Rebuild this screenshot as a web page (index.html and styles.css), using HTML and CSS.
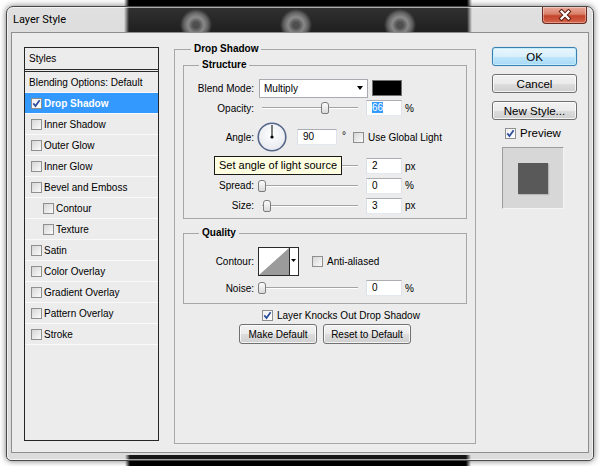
FILE: index.html
```html
<!DOCTYPE html>
<html lang="en">
<head>
<meta charset="utf-8">
<title>Layer Style</title>
<link rel="stylesheet" href="styles.css">
</head>
<body>
<div class="window">
  <header class="titlebar">
    <span class="title">Layer Style</span>
    <div class="close-btn">
      <svg width="20" height="12" viewBox="0 0 20 12"><path class="x-outline" d="M6.5 2.5 L13.5 9.5 M13.5 2.5 L6.5 9.5"/><path class="x-fill" d="M6.5 2.5 L13.5 9.5 M13.5 2.5 L6.5 9.5"/></svg>
    </div>
  </header>
  <main class="content">
    <section class="styles-panel">
      <div class="styles-head">Styles</div>
      <ul class="style-list">
        <li class="style-item blending">Blending Options: Default</li>
        <li class="style-item selected"><span class="cb checked"><svg width="9" height="9" viewBox="0 0 9 9"><path d="M1.3 4.4 L3.5 7 L7.6 1.2" fill="none" stroke="#2b4c9c" stroke-width="1.7"/></svg></span>Drop Shadow</li>
        <li class="style-item"><span class="cb"></span>Inner Shadow</li>
        <li class="style-item"><span class="cb"></span>Outer Glow</li>
        <li class="style-item"><span class="cb"></span>Inner Glow</li>
        <li class="style-item"><span class="cb"></span>Bevel and Emboss</li>
        <li class="style-item sub"><span class="cb"></span>Contour</li>
        <li class="style-item sub"><span class="cb"></span>Texture</li>
        <li class="style-item"><span class="cb"></span>Satin</li>
        <li class="style-item"><span class="cb"></span>Color Overlay</li>
        <li class="style-item"><span class="cb"></span>Gradient Overlay</li>
        <li class="style-item"><span class="cb"></span>Pattern Overlay</li>
        <li class="style-item"><span class="cb"></span>Stroke</li>
      </ul>
    </section>

    <fieldset class="group main-group">
      <legend>Drop Shadow</legend>
      <fieldset class="group sub-group structure">
        <legend>Structure</legend>
        <div class="row row-blend">
          <span class="lbl">Blend Mode:</span>
          <div class="select"><span>Multiply</span><span class="arrow"></span></div>
          <div class="swatch"></div>
        </div>
        <div class="row row-opacity">
          <span class="lbl">Opacity:</span>
          <div class="slider"><span class="thumb" style="left:63px"></span></div>
          <div class="num"><span class="sel">66</span></div>
          <span class="unit">%</span>
        </div>
        <div class="row row-angle">
          <span class="lbl">Angle:</span>
          <svg class="dial" width="30" height="30" viewBox="0 0 30 30">
            <defs><radialGradient id="dg" cx="50%" cy="40%" r="60%"><stop offset="0" stop-color="#ffffff"/><stop offset="1" stop-color="#e6e9ee"/></radialGradient></defs>
            <circle cx="15" cy="15" r="13.8" fill="url(#dg)" stroke="#56668a" stroke-width="1.6"/>
            <line x1="15" y1="15" x2="15" y2="3" stroke="#000" stroke-width="1"/>
            <circle cx="15" cy="15" r="1.6" fill="#000"/>
          </svg>
          <div class="num num-wide">90</div>
          <span class="deg">°</span>
          <span class="cb cb-global"></span>
          <span class="cb-label">Use Global Light</span>
        </div>
        <div class="row row-distance">
          <span class="lbl"></span>
          <div class="slider"><span class="thumb" style="left:0px"></span></div>
          <div class="num">2</div>
          <span class="unit">px</span>
          <div class="tooltip">Set angle of light source</div>
        </div>
        <div class="row row-spread">
          <span class="lbl">Spread:</span>
          <div class="slider"><span class="thumb" style="left:0px"></span></div>
          <div class="num">0</div>
          <span class="unit">%</span>
        </div>
        <div class="row row-size">
          <span class="lbl">Size:</span>
          <div class="slider"><span class="thumb" style="left:5px"></span></div>
          <div class="num">3</div>
          <span class="unit">px</span>
        </div>
      </fieldset>

      <fieldset class="group sub-group quality">
        <legend>Quality</legend>
        <div class="row row-contour">
          <span class="lbl">Contour:</span>
          <svg class="contour" width="41" height="29" viewBox="0 0 41 29">
            <rect x="0.5" y="0.5" width="40" height="28" fill="#fff" stroke="#2a2a2a"/>
            <polygon points="1,28 31,1 31,28" fill="#9b9b9b"/>
            <line x1="31.5" y1="0" x2="31.5" y2="29" stroke="#2a2a2a"/>
            <polygon points="33,12 38,12 35.5,15" fill="#000"/>
          </svg>
          <span class="cb cb-aa"></span>
          <span class="cb-label">Anti-aliased</span>
        </div>
        <div class="row row-noise">
          <span class="lbl">Noise:</span>
          <div class="slider"><span class="thumb" style="left:0px"></span></div>
          <div class="num">0</div>
          <span class="unit">%</span>
        </div>
      </fieldset>

      <div class="knock">
        <span class="cb checked"><svg width="9" height="9" viewBox="0 0 9 9"><path d="M1.3 4.4 L3.5 7 L7.6 1.2" fill="none" stroke="#2b4c9c" stroke-width="1.7"/></svg></span>
        <span class="cb-label">Layer Knocks Out Drop Shadow</span>
      </div>
      <div class="defaults">
        <button class="btn btn-make">Make Default</button>
        <button class="btn btn-reset">Reset to Default</button>
      </div>
    </fieldset>

    <aside class="actions">
      <button class="btn btn-lg btn-ok">OK</button>
      <button class="btn btn-lg">Cancel</button>
      <button class="btn btn-lg btn-new">New Style...</button>
      <div class="preview-row">
        <span class="cb checked"><svg width="9" height="9" viewBox="0 0 9 9"><path d="M1.3 4.4 L3.5 7 L7.6 1.2" fill="none" stroke="#2b4c9c" stroke-width="1.7"/></svg></span>
        <span class="preview-label">Preview</span>
      </div>
      <div class="preview-box"><div class="preview-square"></div></div>
    </aside>
  </main>
</div>
</body>
</html>
```

FILE: styles.css
```css
* { box-sizing: border-box; }
html, body { margin: 0; padding: 0; }

body {
  width: 600px;
  height: 466px;
  overflow: hidden;
  font-family: "Liberation Sans", Arial, sans-serif;
  font-size: 10px;
  color: #000;
  background:
    radial-gradient(circle at 196px 25px, #3a3a3a 0 3px, #8a8a8a 8px, #555 12px, rgba(0,0,0,0) 16px),
    radial-gradient(circle at 296px 25px, #3a3a3a 0 3px, #8a8a8a 8px, #555 12px, rgba(0,0,0,0) 16px),
    radial-gradient(circle at 400px 25px, #3a3a3a 0 3px, #8a8a8a 8px, #555 12px, rgba(0,0,0,0) 16px),
    linear-gradient(90deg, rgba(0,0,0,0), #000 5px, #000 calc(100% - 5px), rgba(0,0,0,0)) 124px 0 / 348px 34px no-repeat,
    linear-gradient(90deg, rgba(0,0,0,0), #000 5px, #000 calc(100% - 5px), rgba(0,0,0,0)) 125px 455px / 346px 11px no-repeat,
    #fff;
}

/* ---------- window frame ---------- */
.window {
  margin: 6px 0 0 6px;
  width: 588px;
  height: 455px;
  border: 1px solid #4a4a4a;
  border-radius: 7px 7px 5px 5px;
  background: linear-gradient(rgba(255,255,255,0.12), rgba(255,255,255,0) 40px), rgba(95,95,95,0.22);
  box-shadow: 0 0 6px rgba(0,0,0,0.55), inset 0 0 0 1px rgba(255,255,255,0.6);
  display: flex;
  flex-direction: column;
}

.titlebar {
  height: 25px;
  flex: none;
  display: flex;
  justify-content: space-between;
  align-items: flex-start;
}

.title {
  font-family: Roboto, "Liberation Sans", sans-serif;
  font-size: 11px;
  line-height: 25px;
  padding-left: 6px;
  color: #000;
}

.close-btn {
  width: 45px;
  height: 17px;
  margin-right: 6px;
  border: 1px solid #6b2a1f;
  border-top: none;
  border-radius: 0 0 4px 4px;
  background: linear-gradient(#e9a99a 0%, #d98069 45%, #c4432c 55%, #d4644a 100%);
  box-shadow: inset 0 0 0 1px rgba(255,255,255,0.35);
  display: flex;
  align-items: center;
  justify-content: center;
}
.close-btn svg { display: block; }
.x-outline { stroke: #5b1d12; stroke-width: 4.2; stroke-linecap: square; fill: none; }
.x-fill { stroke: #fff; stroke-width: 2.2; stroke-linecap: square; fill: none; }

.content {
  flex: 1;
  margin: 0 4px 7px;
  border: 1px solid #8e8e8e;
  background: #ececec;
  display: flex;
  align-items: flex-start;
  padding: 10px 0 0 12px;
}

/* ---------- styles list ---------- */
.styles-panel {
  flex: none;
  margin-top: 4px;
  width: 135px;
  height: 394px;
  border: 1px solid #262626;
}
.styles-head {
  height: 24px;
  padding-left: 4px;
  line-height: 21px;
  border-bottom: 3px double #2a2a2a;
}
.style-list { list-style: none; margin: 0; padding: 0; }
.style-item {
  height: 21px;
  border-bottom: 1px solid #fafafa;
  display: flex;
  align-items: center;
  padding-left: 6px;
  white-space: nowrap;
}
.style-item.blending { padding-left: 4px; }
.style-item.sub { padding-left: 18px; }
.style-item.selected { background: #3399ff; color: #fff; font-weight: bold; }

.cb {
  flex: none;
  width: 11px;
  height: 11px;
  margin-right: 2px;
  border: 1px solid #8e8f8f;
  background: linear-gradient(135deg, #d6d6d6, #fbfbfb);
  display: inline-flex;
  align-items: center;
  justify-content: center;
}
.cb.checked { background: linear-gradient(135deg, #f0f0f0, #fff); }
.cb svg { display: block; }
.cb-label { margin-left: 2px; white-space: nowrap; }

/* ---------- group boxes ---------- */
.group {
  margin: 0;
  border: 1px solid #a7a7a7;
  min-width: 0;
}
.group > legend {
  font-weight: bold;
  padding: 0 3px;
  line-height: 12px;
}
.main-group {
  flex: none;
  margin-left: 15px;
  width: 302px;
  height: 401px;
  padding: 4px 8px 0 8px;
}
.main-group > legend { margin-left: 8px; }
.sub-group { padding: 7px 0 2px 0; }
.sub-group > legend { margin-left: 15px; }
.quality { margin-top: 8px; padding: 8px 0 5px 0; }

.row {
  display: flex;
  align-items: center;
  height: 20px;
  position: relative;
}
.row-angle { height: 38px; }
.row-spread { height: 19px; }
.row-size { height: 21px; }
.row-contour { height: 28px; }
.row-noise { margin-top: 3px; }

.lbl { flex: none; width: 70px; text-align: right; white-space: nowrap; }

.select {
  flex: none;
  margin-left: 5px;
  width: 109px;
  height: 19px;
  background: #fff;
  border: 1px solid #a9abb1;
  display: flex;
  align-items: center;
  justify-content: space-between;
  padding: 0 4px;
}
.arrow {
  width: 0;
  height: 0;
  border-left: 3.5px solid transparent;
  border-right: 3.5px solid transparent;
  border-top: 4px solid #000;
}
.swatch {
  flex: none;
  margin-left: 4px;
  width: 30px;
  height: 16px;
  background: #000;
  border: 1px solid #707070;
}

.slider {
  flex: none;
  position: relative;
  margin-left: 4px;
  width: 104px;
  height: 14px;
  background:
    linear-gradient(#a3a3a3, #a3a3a3) 4px 6px / 96px 1px no-repeat,
    linear-gradient(#fff, #fff) 4px 7px / 96px 1px no-repeat;
}
.thumb {
  position: absolute;
  top: 1px;
  width: 8px;
  height: 12px;
  border: 1px solid #7d7d7d;
  border-radius: 3px 3px 2px 2px;
  background: linear-gradient(#fdfdfd, #d9d9d9);
}

.num {
  flex: none;
  margin-left: 4px;
  width: 36px;
  height: 16px;
  background: #fff;
  border: 1px solid;
  border-color: #abadb3 #e2e3ea #e3e9ef #dbdfe6;
  padding-left: 5px;
  line-height: 14px;
}
.num-wide { margin-left: 10px; width: 40px; }
.sel { background: #3399ff; color: #fff; }
.unit { margin-left: 3px; }

.dial { flex: none; display: block; margin-left: 3px; }
.deg { align-self: flex-start; margin-top: 12px; margin-left: 5px; }
.cb-global { margin-left: 7px; }

.tooltip {
  position: absolute;
  left: 30px;
  top: 0;
  height: 19px;
  padding: 0 4px;
  background: #ffffe1;
  border: 1px solid #1a1a1a;
  font-size: 11px;
  line-height: 17px;
  white-space: nowrap;
}

.contour { flex: none; display: block; margin-left: 4px; }
.cb-aa { margin-left: 13px; }

.knock {
  display: flex;
  align-items: center;
  height: 16px;
  margin: 3px 0 0 79px;
}
.defaults {
  display: flex;
  justify-content: center;
  gap: 6px;
  margin-top: 1px;
}

/* ---------- buttons ---------- */
.btn {
  height: 20px;
  padding: 0;
  border: 1px solid #707070;
  border-radius: 3px;
  background: linear-gradient(#f2f2f2 0%, #ebebeb 50%, #dddddd 51%, #cfcfcf 100%);
  box-shadow: inset 0 0 0 1px rgba(255,255,255,0.75);
  font-family: "Liberation Sans", Arial, sans-serif;
  font-size: 10px;
  color: #000;
  display: flex;
  align-items: center;
  justify-content: center;
}
.btn-make { width: 78px; }
.btn-reset { width: 88px; }

.actions {
  flex: none;
  margin-left: 16px;
  margin-top: 4px;
  width: 85px;
  display: flex;
  flex-direction: column;
}
.btn-lg {
  width: 85px;
  height: 19px;
  font-size: 11.5px;
  margin-bottom: 8px;
}
.btn-ok {
  border-color: #3c7fb1;
  background: linear-gradient(#eaf6fd 0%, #d9f0fc 50%, #bee6fd 51%, #a7d9f5 100%);
  box-shadow: inset 0 0 0 1px #c4ecfc, 0 0 1px #6fc3ec;
}
.btn-new { margin-bottom: 5px; }

.preview-row {
  display: flex;
  align-items: center;
  height: 16px;
  padding-left: 13px;
  font-size: 11.5px;
}
.preview-label { margin-left: 2px; }
.preview-box {
  margin: 6px 0 0 10px;
  width: 62px;
  height: 62px;
  border: 1px solid;
  border-color: #9d9d9d #f4f4f4 #f4f4f4 #9d9d9d;
  background: #d7d7d7;
  display: flex;
  align-items: center;
  justify-content: center;
}
.preview-square {
  width: 30px;
  height: 31px;
  background: #595959;
  box-shadow: 1px 1px 1px rgba(0,0,0,0.15);
}
```
